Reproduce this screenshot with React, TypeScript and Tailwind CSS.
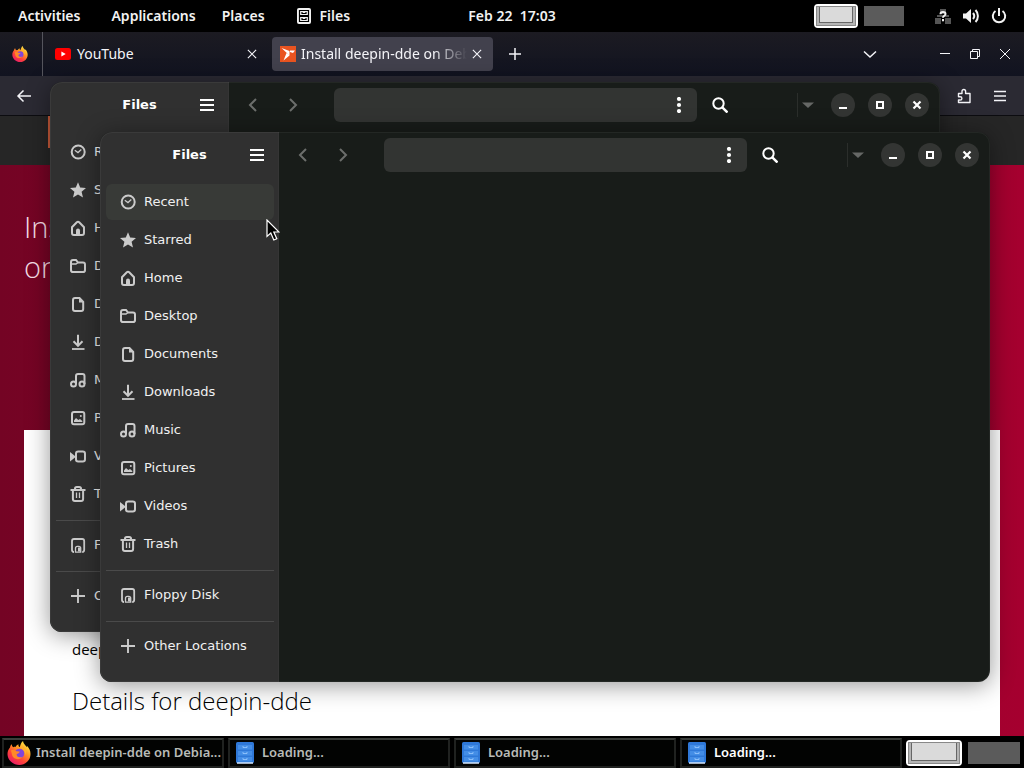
import type { ReactNode } from "react";

const shellFont = "font-['Noto_Sans','Open_Sans',sans-serif]";

function Svg({ children, size = 16, className = "" }: { children: ReactNode; size?: number; className?: string }) {
  return (
    <svg width={size} height={size} viewBox="0 0 16 16" fill="none" stroke="currentColor" strokeWidth="2" aria-hidden="true" className={`shrink-0 ${className}`}>
      {children}
    </svg>
  );
}

const places: { name: string; icon: ReactNode }[] = [
  {
    name: "Recent",
    icon: (
      <>
        <circle cx="8.2" cy="8" r="6.5" strokeWidth="2" />
        <path d="M4.8 6.2 8 8.6 11.3 5.6" strokeWidth="1.3" />
      </>
    ),
  },
  {
    name: "Starred",
    icon: <path d="M8 0.3 10.2 5.6 16 6 11.6 9.8 13 15.6 8 12.5 3 15.6 4.4 9.8 0 6 5.8 5.6Z" fill="currentColor" stroke="none" />,
  },
  {
    name: "Home",
    icon: (
      <>
        <path d="M2 7.2v5.9c0 1.1.8 1.9 1.9 1.9h8.2c1.1 0 1.9-.8 1.9-1.9V7.2L9.2 2.3a1.8 1.8 0 0 0-2.4 0Z" />
        <path d="M6 15v-4.5a2 2 0 0 1 4 0V15Z" fill="currentColor" stroke="none" />
      </>
    ),
  },
  {
    name: "Desktop",
    icon: (
      <>
        <path d="M1 12.2V4.1C1 2.8 1.800 2 3 2h3l2 2.500h5c1.200 0 2 .8 2 2v5.700c0 1.200-.8 1.800-2 1.800H3c-1.200 0-2-.6-2-1.800Z" />
        <path d="M1 6h5l2-1.500" strokeWidth="1.300" />
      </>
    ),
  },
  {
    name: "Documents",
    icon: (
      <>
        <path d="M5 2h4.500L13.200 6v7c0 1.200-.8 2-2 2H5c-1.200 0-2-.8-2-2V4c0-1.200.8-2 2-2Z" />
        <path d="M9 2v4.500h4.500Z" fill="currentColor" stroke="none" />
      </>
    ),
  },
  {
    name: "Downloads",
    icon: (
      <>
        <path d="M8 .8v11M3.500 7.300 8 11.800l4.500-4.500" />
        <path d="M2 15h12.500" strokeWidth="1.800" />
      </>
    ),
  },
  {
    name: "Music",
    icon: (
      <>
        <circle cx="3.500" cy="12" r="2.500" />
        <circle cx="12" cy="12" r="2.500" />
        <path d="M6 12V4c0-1.200.8-2 2-2h4.500c1.200 0 2 .8 2 2v8" />
      </>
    ),
  },
  {
    name: "Pictures",
    icon: (
      <>
        <rect x="2" y="2" width="12.300" height="12.300" rx="2" />
        <path d="M4 12V10.500l2-2.500 2.300 2 1.700-1 2.300 2v1Z" fill="currentColor" stroke="none" />
        <circle cx="10.800" cy="6" r="1" fill="currentColor" stroke="none" />
      </>
    ),
  },
  {
    name: "Videos",
    icon: (
      <>
        <rect x="6" y="3.500" width="9" height="10" rx="2.200" />
        <path d="M0 4v9.500L5 9.500v-1.500Z" fill="currentColor" stroke="none" />
      </>
    ),
  },
  {
    name: "Trash",
    icon: (
      <>
        <path d="M.5 4h15M5 4V2.800C5 1.800 5.800 1 6.800 1h2.400c1 0 1.800.8 1.800 1.800V4M2.900 4v9c0 1.200.8 2 2 2h6.200c1.200 0 2-.8 2-2V4" />
        <path d="M6.500 6.500v5.500M9.500 6.500v5.500" strokeWidth="1.300" />
      </>
    ),
  },
];

const floppyIcon = (
  <>
    <path d="M4 15c-1.200 0-2-.7-2-1.900V4c0-1.200.8-2 2-2h8.200c1.200 0 2 .8 2 2v9.100c0 1.200-.8 1.900-2 1.900" strokeWidth="1.800" />
    <path d="M5.500 15.200v-4c0-1.200.7-1.900 1.900-1.900h1.400c1.200 0 1.900.7 1.900 1.900v4Z" strokeWidth="1.300" />
    <path d="M8 10.500h2.200V14.500H8Z" fill="currentColor" stroke="none" />
  </>
);

const plusIcon = <path d="M8 1v14M1 8h14" strokeWidth="1.900" />;

function PlaceRow({ name, icon, active = false }: { name: string; icon: ReactNode; active?: boolean }) {
  return (
    <li>
      <button type="button" className={`mb-0.5 flex h-9 w-full items-center gap-2 rounded-md pl-3.5 text-left text-[13px] whitespace-nowrap ${active ? "bg-[#383a37]" : ""}`}>
        <Svg className="text-[#cbcbcb]">{icon}</Svg>
        <span>{name}</span>
      </button>
    </li>
  );
}

function PlaceList({ children }: { children: ReactNode }) {
  return <ul className="pr-1 pl-1.5">{children}</ul>;
}

function Divider() {
  return <hr className="mt-2 mr-1 mb-1.5 ml-1.5 border-[#4a4a4a]" />;
}

function RoundButton({ label, children }: { label: string; children: ReactNode }) {
  return (
    <button type="button" aria-label={label} className="flex size-6 shrink-0 items-center justify-center rounded-full bg-[#333533] text-white">
      <Svg>{children}</Svg>
    </button>
  );
}

function FilesWindow({ className, active = false }: { className: string; active?: boolean }) {
  return (
    <section aria-label="Files" className={`absolute flex overflow-hidden rounded-xl bg-[#181c19] font-['DejaVu_Sans',sans-serif] text-[#f0f0f0] shadow-[0_3px_24px_rgba(0,0,0,0.42)] outline -outline-offset-1 outline-[#ffffff0d] ${className}`}>
      <aside className="w-[179px] shrink-0 border-r border-[#353535] bg-[#303030] pb-4">
        <div className="mb-1.5 flex h-[46px] items-center">
          <h2 className="flex-1 pl-[42px] text-center text-[13px] font-bold text-white">Files</h2>
          <button type="button" aria-label="Main menu" className="mr-[13px] ml-3 text-white">
            <Svg><path d="M1 3h14M1 8h14M1 13h14" /></Svg>
          </button>
        </div>
        <PlaceList>
          {places.map((p, i) => (
            <PlaceRow key={p.name} name={p.name} icon={p.icon} active={active && i === 0} />
          ))}
        </PlaceList>
        <Divider />
        <PlaceList><PlaceRow name="Floppy Disk" icon={floppyIcon} /></PlaceList>
        <Divider />
        <PlaceList><PlaceRow name="Other Locations" icon={plusIcon} /></PlaceList>
      </aside>
      <div className="min-w-0 flex-1">
        <div className="flex h-[46px] items-center pr-[11px]">
          <button type="button" aria-label="Back" className="ml-4 text-[#6c6e6c]"><Svg><path d="M11 2 5 8l6 6" /></Svg></button>
          <button type="button" aria-label="Forward" className="ml-6 text-[#6c6e6c]"><Svg><path d="M5 2l6 6-6 6" /></Svg></button>
          <div className="ml-[33px] flex h-[34px] max-w-[363px] flex-1 items-center rounded-md bg-[#323432] pr-2.5">
            <input aria-label="Location" className="h-full min-w-0 flex-1 bg-transparent px-2 outline-none" />
            <button type="button" aria-label="View menu" className="text-white">
              <Svg><g fill="currentColor" stroke="none"><circle cx="8" cy="2" r="2.100" /><circle cx="8" cy="8" r="2.100" /><circle cx="8" cy="14" r="2.100" /></g></Svg>
            </button>
          </div>
          <button type="button" aria-label="Search" className="ml-[15px] text-white">
            <Svg><circle cx="6.500" cy="6.500" r="5.200" /><path d="M10.300 10.300 15.500 15.500" strokeWidth="2.500" /></Svg>
          </button>
          <div className="ml-auto h-6 w-px bg-[#2b2e2b]" />
          <button type="button" aria-label="View options" className="mr-[15px] ml-0.5 text-[#666866]">
            <Svg><path d="M2 5.500h12L8 11Z" fill="currentColor" stroke="none" /></Svg>
          </button>
          <div className="flex gap-[13px]">
            <RoundButton label="Minimize"><path d="M4 11h8" /></RoundButton>
            <RoundButton label="Maximize"><rect x="5" y="5" width="6" height="6" /></RoundButton>
            <RoundButton label="Close"><path d="m4.500 4.500 7 7m0-7-7 7" strokeWidth="2.200" /></RoundButton>
          </div>
        </div>
      </div>
    </section>
  );
}

function FirefoxLogo({ size }: { size: number }) {
  return (
    <svg width={size} height={size} viewBox="0 0 24 24" aria-hidden="true" className="shrink-0">
      <defs>
        <linearGradient id="fx-body" x1="0.850" y1="0.050" x2="0.200" y2="1">
          <stop offset="0" stopColor="#fff04a" />
          <stop offset=".35" stopColor="#ff9a22" />
          <stop offset=".65" stopColor="#ff4438" />
          <stop offset="1" stopColor="#e51670" />
        </linearGradient>
      </defs>
      <path d="M3 6.500C3.200 5 4 3.800 4.700 3.300c.1 1.200.6 2.200 1.500 2.900.7-.3 1.600-.4 2.400-.3.6-1.200 1.700-2.200 2.900-2.600-.3 1.200.1 2.400 1.200 2.900C13.500 4 14 1.500 16 0c.2 3 3 4.500 3.800 6.300l.1-1.500C22.500 7.500 23.500 10 23.500 13 23.500 19 18.500 24 12.300 24S.5 19 .5 13c0-2.500.9-4.800 2.500-6.500Z" fill="url(#fx-body)" />
      <circle cx="12.500" cy="12.500" r="4.800" fill="#8145d9" />
      <path d="M4 9.500c2-.8 4-.6 5.500.8l3.200.1c-.3 1.500-1.700 2-3 2.600-.5 2.800 3 4.500 6 2.500-1.700 3.500-9 3.800-10.500-.9Z" fill="#ff8928" />
      <path d="M13 7c3.700.6 5.500 3.800 4.800 7.200 1.500-1.700 1.600-4 .7-6.200L16 5Z" fill="#ffb02e" />
    </svg>
  );
}

function Workspaces({ large = false }: { large?: boolean }) {
  return (
    <div className={`flex items-center gap-1.5 ${large ? "h-[26px]" : "h-6"}`}>
      <button type="button" aria-label="Workspace 1" className={`h-full rounded-sm border-2 border-white bg-[#b5b5b5] ${large ? "w-14" : "w-11"}`}>
        <span className="block h-full border border-[#888] pr-0.5 pb-0.5 pl-0.5">
          <span className="block h-full border-r border-b border-l border-[#666] bg-[#dadada]" />
        </span>
      </button>
      <button type="button" aria-label="Workspace 2" className={`bg-[#5b5b5b] ${large ? "h-[22px] w-[52px]" : "h-5 w-10"}`} />
    </div>
  );
}

function TopBar() {
  return (
    <header className="relative z-10 flex h-8 items-center bg-black pr-[17px] pl-[18px] text-sm font-semibold text-[#f2f2f2]">
      <button type="button">Activities</button>
      <button type="button" className="ml-[31px]">Applications</button>
      <button type="button" className="ml-[26px]">Places</button>
      <button type="button" className="ml-[31px] flex items-center gap-2">
        <Svg>
          <rect x="1" y="0" width="14" height="16" rx="2" fill="currentColor" stroke="none" />
          <path d="M3.500 2.500h9v5h-9Zm0 6h9v5h-9Z" stroke="#000" strokeWidth="1.200" />
          <path d="M6 4v1.500h4V4M6 10v1.500h4V10" stroke="#000" strokeWidth="1.200" />
        </Svg>
        <span>Files</span>
      </button>
      <button type="button" className="absolute left-1/2 -translate-x-1/2 whitespace-pre">Feb 22  17:03</button>
      <div className="mr-[31px] ml-auto"><Workspaces /></div>
      <div className="flex items-center gap-3">
        <Svg>
          <path d="M5 1h6v5H5ZM0 10h6v6H0ZM10 10h6v6h-6ZM2 7h12v2H2Z" fill="#555" stroke="none" />
          <path d="M5.500 6.200C5.500 3.200 10.500 3.200 10.500 6c0 1.900-2.500 1.700-2.500 3.800M8 11v2.200" />
        </Svg>
        <Svg>
          <path d="M0 5.500h3L8 1v14L3 10.500H0Z" fill="currentColor" stroke="none" />
          <path d="M10 5c1.500 1.800 1.500 4.200 0 6M12.500 2c3.200 3.300 3.200 8.700 0 12" />
        </Svg>
        <Svg><path d="M4.500 3a6.200 6.200 0 1 0 7 0M8 0v8" /></Svg>
      </div>
    </header>
  );
}

function Browser() {
  return (
    <div className="absolute inset-0 flex flex-col">
      <div className="flex h-11 shrink-0 items-center bg-linear-to-b from-[#1c1b22] to-[#111320] text-sm text-[#f4f4f8]">
        <div className="flex h-full w-[43px] shrink-0 items-center justify-center border-r border-[#55555d] pr-0.5"><FirefoxLogo size={16} /></div>
        <div className="flex h-full w-[229px] shrink-0 items-center pr-[14px] pl-3">
          <svg width="16" height="12" viewBox="0 0 16 12" aria-hidden="true">
            <rect width="16" height="12" rx="2.500" fill="#f00" />
            <path d="m6.400 3.600 4.300 2.400-4.300 2.400Z" fill="#fff" />
          </svg>
          <span className="ml-1.5 flex-1">YouTube</span>
          <button type="button" aria-label="Close YouTube"><Svg size={12}><path d="m2.500 2.500 11 11m0-11-11 11" strokeWidth="1.500" /></Svg></button>
        </div>
        <div className="flex h-[34px] w-[221px] shrink-0 items-center rounded-sm bg-[#42414d] pr-2.5 pl-2">
          <svg width="16" height="16" viewBox="0 0 16 16" aria-hidden="true" className="shrink-0">
            <rect width="16" height="16" fill="#e95420" />
            <path d="M1.500 2 9.500 5v4.500Z M9.500 9.500 3.500 14.500 6.500 7Z M10 4.500h5l-2 2.500-3-1Z" fill="#fff" />
          </svg>
          <span className="ml-[5px] flex-1 overflow-hidden mask-r-from-80% mask-r-to-100% whitespace-nowrap">Install deepin-dde on Debian</span>
          <button type="button" aria-label="Close Install deepin-dde" className="ml-1"><Svg size={12}><path d="m2.500 2.500 11 11m0-11-11 11" strokeWidth="1.500" /></Svg></button>
        </div>
        <button type="button" aria-label="New tab" className="ml-3.5"><Svg><path d="M8 2v12M2 8h12" strokeWidth="1.500" /></Svg></button>
        <button type="button" aria-label="List all tabs" className="mr-[59px] ml-auto"><Svg><path d="m2 5.500 6 5.500 6-5.500" strokeWidth="1.500" /></Svg></button>
        <div className="mr-[11px] flex gap-[14px]">
          <button type="button" aria-label="Minimize browser"><Svg><path d="M3 7.500h10" strokeWidth="1" /></Svg></button>
          <button type="button" aria-label="Restore browser"><Svg><path d="M3.500 5.500h7v7h-7ZM5.500 5.500v-2h7v7h-2" strokeWidth="1" /></Svg></button>
          <button type="button" aria-label="Close browser"><Svg><path d="m3 3 10 10m0-10L3 13" strokeWidth="1" /></Svg></button>
        </div>
      </div>
      <div className="flex h-10 shrink-0 items-center border-b border-[#0c0c10] bg-[#2b2a33] px-4 text-[#f4f4f8]">
        <button type="button" aria-label="Go back"><Svg><path d="M15 8H2M7.500 2.500 2 8l5.500 5.500" strokeWidth="1.500" /></Svg></button>
        <button type="button" aria-label="Extensions" className="mr-5 ml-auto">
          <Svg><path d="M2.500 5.500H6V3.300a1.800 1.800 0 1 1 3.600 0v2.200H14v9H2.500V12h1.800a1.600 1.600 0 0 0 0-3.200H2.500Z" strokeWidth="1.400" strokeLinejoin="round" /></Svg>
        </button>
        <button type="button" aria-label="Browser menu"><Svg><path d="M2 3.500h12M2 8h12M2 12.500h12" strokeWidth="1.300" /></Svg></button>
      </div>
      <div className="h-[49px] shrink-0 bg-[#262626] pl-12"><div className="h-8 w-9 bg-[#c95a3a]" /></div>
      <div className="flex min-h-0 flex-1 flex-col bg-linear-to-r from-[#740424] to-[#a5002f] px-6 font-['Open_Sans',sans-serif] font-light">
        <h1 className="h-[265px] shrink-0 pt-[42px] text-[29px] leading-10 text-[#f6dfe6]">Install deepin-dde<br />on Debian</h1>
        <article className="flex-1 bg-white px-12 pt-[207px] text-black">
          <p className="text-[15px] leading-6 font-normal">deepin-dde</p>
          <h2 className="mt-[22px] text-2xl leading-9">Details for deepin-dde</h2>
        </article>
      </div>
    </div>
  );
}

function DrawerLogo() {
  return (
    <svg width="18" height="22" viewBox="0 0 18 22" aria-hidden="true" className="shrink-0">
      <rect width="18" height="21" rx="1.500" fill="#2f78d8" />
      <path d="M2 3h14v4.500H2Zm0 6h14v4.500H2Zm0 6h14v4.500H2Z" fill="#438de6" />
      <path d="M7 4v1.500h4V4M7 10v1.500h4V10M7 16v1.500h4V16" fill="none" stroke="#9ac9ff" strokeWidth=".8" />
      <path d="M1 21h16" stroke="#d8eaff" strokeWidth="1.500" />
    </svg>
  );
}

function TaskButton({ title, icon, active = false }: { title: string; icon: ReactNode; active?: boolean }) {
  return (
    <button type="button" className={`flex h-[30px] max-w-[222px] min-w-0 flex-1 items-center border-2 border-[#202220] border-t-[#3b3e3b] bg-[#020302] text-left text-[13px] font-semibold ${active ? "text-white" : "text-[#b8bbb7]"}`}>
      <span className="mr-0.5 flex w-[30px] shrink-0 justify-center">{icon}</span>
      <span className="truncate">{title}</span>
    </button>
  );
}

export default function App() {
  return (
    <div className={`flex min-h-screen flex-col overflow-hidden bg-black ${shellFont}`}>
      <TopBar />
      <main className="relative min-h-[680px] flex-1 overflow-hidden">
        <Browser />
        <FilesWindow className="top-[50px] right-[84px] left-[50px]" />
        <FilesWindow active className="top-[100px] right-[34px] left-[100px]" />
        <svg width="14" height="23" viewBox="0 0 14 23" aria-hidden="true" className="absolute top-[187px] left-[266px]">
          <path d="M1 1v16.500l3.800-3.500 3 7 3-1.300-3-6.700H13Z" fill="#000" stroke="#fff" strokeWidth="1.200" />
        </svg>
      </main>
      <footer className="relative z-10 flex h-8 items-center gap-1 bg-black pt-0.5 pr-1 pl-0.5">
        <TaskButton title="Install deepin-dde on Debia..." icon={<FirefoxLogo size={24} />} />
        <TaskButton title="Loading..." icon={<DrawerLogo />} />
        <TaskButton title="Loading..." icon={<DrawerLogo />} />
        <TaskButton title="Loading..." icon={<DrawerLogo />} active />
        <div className="ml-auto"><Workspaces large /></div>
      </footer>
    </div>
  );
}
